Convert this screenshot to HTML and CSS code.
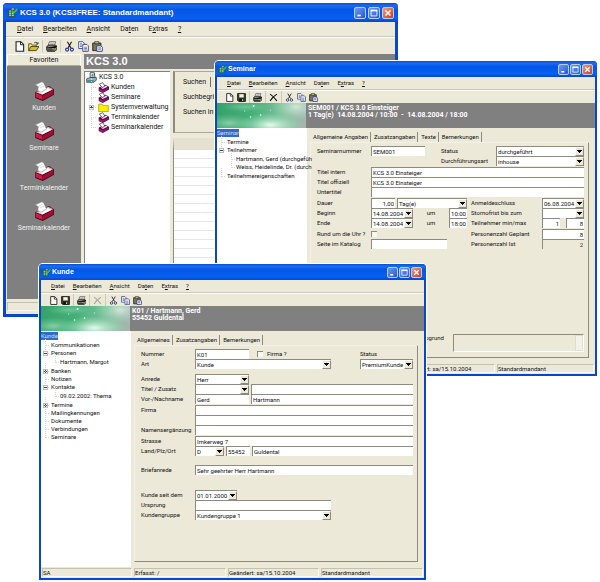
FILE: index.html
```html
<!DOCTYPE html>
<html lang="de">
<head>
    <meta charset="UTF-8">
    <meta name="viewport" content="width=device-width, initial-scale=1.0">
    <title>KCS 3.0</title>
    <link rel="stylesheet" href="styles.css">
</head>
<body>
    <svg class="sprites" aria-hidden="true">
        <symbol id="app" viewBox="0 0 16 16">
            <path fill="#2c5a50" d="M1 3h11v12H1z"/>
            <path fill="#8fd3a2" d="M3 5h3v2H3zM3 8h3v2H3zM3 11h3v2H3zM7 8h3v2H7zM7 11h3v2H7z"/>
            <path fill="#35c23c" d="M7 4l3 2 5-5v4l-5 5-3-3z"/>
            <path fill="#e4c33a" d="M7 2h3v2H7z"/>
        </symbol>
        <symbol id="new" viewBox="0 0 16 16">
            <path fill="#fff" stroke="#222" stroke-width="1.6" d="M3 1h7l4 4v10H3z"/>
            <path fill="none" stroke="#222" stroke-width="1.4" d="M9.500 1v4.500H14"/>
        </symbol>
        <symbol id="open" viewBox="0 0 16 16">
            <path fill="#ffe97a" stroke="#4a4300" stroke-width="1.2" d="M1 14V4h4l1 2h6v3"/>
            <path fill="#c9bf30" stroke="#3c3600" stroke-width="1.2" d="M1 14l3-6h12l-4 6z"/>
            <path fill="none" stroke="#222" stroke-width="1.2" d="M9 3c2-2 4-1 5 1M14.500 1.500v3h-3"/>
        </symbol>
        <symbol id="save" viewBox="0 0 16 16">
            <path fill="#3b3b28" stroke="#111" stroke-width="1.4" d="M1 1h14v14H3l-2-2z"/>
            <path fill="#f1efe4" d="M4 2h8v6H4z"/>
            <path fill="#111" d="M4 10h8v5H4z"/>
            <path fill="#ddd" d="M9 11h2v3H9z"/>
        </symbol>
        <symbol id="print" viewBox="0 0 16 16">
            <path fill="#fff" stroke="#333" d="M5 1h9l-2 6H3z"/>
            <path stroke="#777" d="M6 3h6M5 5h6"/>
            <path fill="#8b8b7c" stroke="#222" stroke-width="1.3" d="M1 8l3-2h10l2 2v4l-3 3H2l-1-2z"/>
            <path stroke="#111" stroke-width="1.3" d="M1 10h12l3-3M2 13h10"/>
            <path fill="#e5d44c" d="M9 11h3v1H9z"/>
        </symbol>
        <symbol id="delete" viewBox="0 0 16 16">
            <path fill="none" stroke="currentColor" stroke-width="2" d="M2 2c5 3 8 7 12 12M14 2C9 5 5 9 2 14"/>
        </symbol>
        <symbol id="cut" viewBox="0 0 16 16">
            <path fill="none" stroke="#222" stroke-width="1.6" d="M5 1l5 9M11 1L6 10"/>
            <circle cx="4.500" cy="12.500" r="2.200" fill="none" stroke="#263a86" stroke-width="1.6"/>
            <circle cx="11.500" cy="12.500" r="2.200" fill="none" stroke="#263a86" stroke-width="1.6"/>
        </symbol>
        <symbol id="copy" viewBox="0 0 16 16">
            <path fill="#fff" stroke="#31427e" stroke-width="1.3" d="M1 1h6l2 2v8H1z"/>
            <path fill="#fff" stroke="#31427e" stroke-width="1.3" d="M7 5h6l2 2v8H7z"/>
            <path stroke="#31427e" d="M3 4h3M3 6h3M3 8h3M9 9h4M9 11h4M9 13h4"/>
        </symbol>
        <symbol id="paste" viewBox="0 0 16 16">
            <path fill="#77755c" stroke="#222" stroke-width="1.3" d="M1 3h12v11H1z"/>
            <path fill="#d9cf6a" stroke="#222" d="M4 1h6v3H4z"/>
            <path fill="#fff" stroke="#26367a" stroke-width="1.3" d="M7 7h6l2 2v6H7z"/>
            <path stroke="#26367a" d="M9 10h4M9 12h4"/>
        </symbol>
        <symbol id="box" viewBox="0 0 32 32">
            <path fill="#3b0614" d="M2 18L24 8l8 5v9L14 32 2 27z"/>
            <path fill="#e9a9b9" d="M3 18l20-9 8 4-18 9z"/>
            <path fill="#fff" d="M7 18l15-7 6 3-14 7z"/>
            <path fill="#d3174a" d="M3 19l10 4v7L3 26z"/>
            <path fill="#a20d35" d="M13 24l18-10v7L13 31z"/>
            <path fill="#fff" stroke="#888" d="M2 6l11-5 3 3 4 9-9 5-5-3 1-6z"/>
            <path fill="none" stroke="#bbb" d="M8 8l6-3M10 11l6-3"/>
        </symbol>
        <symbol id="box-small" viewBox="0 0 16 16">
            <path fill="#5a0a4a" d="M1 8l10-4 5 3v4l-9 5-6-3z"/>
            <path fill="#f2dfe8" d="M4 8l8-3 2 2-7 3z"/>
            <path fill="#c2185b" d="M2 10l5 2v3l-5-2z"/>
            <path fill="#8a1478" d="M7 12l8-4v2l-8 5z"/>
            <path fill="#fff" stroke="#333" d="M2 3l5-2 3 5-4 2z"/>
        </symbol>
        <symbol id="root" viewBox="0 0 16 16">
            <path fill="#fff" stroke="#234" stroke-width="1.2" d="M6 1h6l1 7H6z"/>
            <path fill="#2f9fa0" d="M8 3h3v4H8z"/>
            <path fill="#9ab0b5" stroke="#233" d="M1 10l5-2h9v4l-4 3H1z"/>
            <path fill="#2d7f86" d="M2 12h9v2H2z"/>
        </symbol>
        <symbol id="folder" viewBox="0 0 16 16">
            <path fill="#ffef00" stroke="#98902a" d="M1 3h5l1 2h8v9H1z"/>
        </symbol>
        <symbol id="minimize" viewBox="0 0 12 12"><path fill="#fff" d="M3 8h4v2H3z"/></symbol>
        <symbol id="maximize" viewBox="0 0 12 12"><path fill="none" stroke="#fff" d="M2.500 3v6.500h7V3"/><path fill="#fff" d="M2 2h8v2H2z"/></symbol>
        <symbol id="close" viewBox="0 0 12 12"><path stroke="#fff" stroke-width="1.700" d="M3 3l6 6M9 3L3 9"/></symbol>
        <linearGradient id="sky" x1="0" x2="1">
            <stop offset="0" stop-color="#35a26a"/>
            <stop offset=".4" stop-color="#46b07a"/>
            <stop offset=".7" stop-color="#77bf97"/>
            <stop offset="1" stop-color="#a9b3b0"/>
        </linearGradient>
        <radialGradient id="glow">
            <stop offset="0" stop-color="#e6fbee"/>
            <stop offset="1" stop-color="#9be0b8" stop-opacity="0"/>
        </radialGradient>
        <symbol id="aurora" viewBox="0 0 90 25" preserveAspectRatio="none">
            <path fill="url(#sky)" d="M0 0h90v25H0z"/>
            <ellipse cx="54" cy="22" rx="34" ry="12" fill="url(#glow)"/>
            <ellipse cx="80" cy="4" rx="26" ry="14" fill="url(#glow)" opacity=".7"/>
            <ellipse cx="12" cy="20" rx="26" ry="9" fill="url(#glow)" opacity=".45"/>
            <ellipse cx="28" cy="4" rx="24" ry="5" fill="url(#glow)" opacity=".3"/>
            <g fill="#fff"><circle cx="37" cy="3" r="1"/><circle cx="44" cy="12" r=".8"/><circle cx="34" cy="14" r=".7"/><circle cx="28" cy="8" r=".5"/><circle cx="54" cy="7" r=".5"/></g>
        </symbol>
    </svg>

    <main class="desktop">
        <!-- Hauptfenster -->
        <section class="window window-main">
            <header class="titlebar">
                <svg class="icon"><use href="#app"/></svg>
                <h1>KCS 3.0 (KCS3FREE: Standardmandant)</h1>
                <button class="win-btn" aria-label="Minimieren"><svg><use href="#minimize"/></svg></button>
                <button class="win-btn" aria-label="Maximieren"><svg><use href="#maximize"/></svg></button>
                <button class="win-btn win-close" aria-label="Schließen"><svg><use href="#close"/></svg></button>
            </header>
            <nav class="menubar">
                <button><u>D</u>atei</button>
                <button><u>B</u>earbeiten</button>
                <button><u>A</u>nsicht</button>
                <button>Da<u>t</u>en</button>
                <button>E<u>x</u>tras</button>
                <button><u>?</u></button>
            </nav>
            <div class="toolbar">
                <button aria-label="Neu"><svg class="icon"><use href="#new"/></svg></button>
                <button aria-label="Öffnen"><svg class="icon"><use href="#open"/></svg></button>
                <span class="sep"></span>
                <button aria-label="Drucken"><svg class="icon"><use href="#print"/></svg></button>
                <span class="sep"></span>
                <button aria-label="Ausschneiden"><svg class="icon"><use href="#cut"/></svg></button>
                <button aria-label="Kopieren"><svg class="icon"><use href="#copy"/></svg></button>
                <button aria-label="Einfügen"><svg class="icon"><use href="#paste"/></svg></button>
            </div>
            <div class="main-body">
                <aside class="favorites">
                    <h2>Favoriten</h2>
                    <button><svg><use href="#box"/></svg>Kunden</button>
                    <button><svg><use href="#box"/></svg>Seminare</button>
                    <button><svg><use href="#box"/></svg>Terminkalender</button>
                    <button><svg><use href="#box"/></svg>Seminarkalender</button>
                </aside>
                <div class="workspace">
                    <h2 class="workspace-title">KCS 3.0</h2>
                    <div class="workspace-panes">
                        <div class="nav-tree">
                            <p><svg class="icon"><use href="#root"/></svg>KCS 3.0</p>
                            <ul>
                                <li><svg class="icon"><use href="#box-small"/></svg>Kunden</li>
                                <li><svg class="icon"><use href="#box-small"/></svg>Seminare</li>
                                <li class="closed"><svg class="icon"><use href="#folder"/></svg>Systemverwaltung</li>
                                <li><svg class="icon"><use href="#box-small"/></svg>Terminkalender</li>
                                <li><svg class="icon"><use href="#box-small"/></svg>Seminarkalender</li>
                            </ul>
                        </div>
                        <div class="search-side">
                            <div class="search">
                                <button class="search-tab">Suchen</button>
                                <p>Suchbegriff</p>
                                <p>Suchen in</p>
                            </div>
                            <div class="result-list"></div>
                        </div>
                    </div>
                </div>
            </div>
            <footer class="statusbar"><span></span></footer>
        </section>

        <!-- Seminar -->
        <section class="window window-small window-seminar">
            <header class="titlebar">
                <svg class="icon"><use href="#app"/></svg>
                <h1>Seminar</h1>
                <button class="win-btn" aria-label="Minimieren"><svg><use href="#minimize"/></svg></button>
                <button class="win-btn" aria-label="Maximieren"><svg><use href="#maximize"/></svg></button>
                <button class="win-btn win-close" aria-label="Schließen"><svg><use href="#close"/></svg></button>
            </header>
            <nav class="menubar">
                <button><u>D</u>atei</button>
                <button><u>B</u>earbeiten</button>
                <button><u>A</u>nsicht</button>
                <button>Da<u>t</u>en</button>
                <button>E<u>x</u>tras</button>
                <button><u>?</u></button>
            </nav>
            <div class="toolbar">
                <button aria-label="Neu"><svg class="icon"><use href="#new"/></svg></button>
                <button aria-label="Speichern"><svg class="icon"><use href="#save"/></svg></button>
                <span class="sep"></span>
                <button aria-label="Drucken"><svg class="icon"><use href="#print"/></svg></button>
                <span class="sep"></span>
                <button aria-label="Löschen"><svg class="icon"><use href="#delete"/></svg></button>
                <span class="sep"></span>
                <button aria-label="Ausschneiden"><svg class="icon"><use href="#cut"/></svg></button>
                <button aria-label="Kopieren"><svg class="icon"><use href="#copy"/></svg></button>
                <button aria-label="Einfügen"><svg class="icon"><use href="#paste"/></svg></button>
            </div>
            <div class="banner">
                <svg><use href="#aurora"/></svg>
                <p>SEM001 / KCS 3.0 Einsteiger<br>1 Tag(e)&nbsp; 14.08.2004 / 10:00&nbsp; -&nbsp; 14.08.2004 / 18:00</p>
            </div>
            <div class="record">
                <div class="tree">
                    <p><span>Seminar</span></p>
                    <ul>
                        <li>Termine</li>
                        <li class="opened">Teilnehmer
                            <ul>
                                <li>Hartmann, Gerd (durchgefüh</li>
                                <li>Weiss, Heidelinde, Dr. (durch</li>
                            </ul>
                        </li>
                        <li>Teilnehmereigenschaften</li>
                    </ul>
                </div>
                <div class="sheet">
                    <div class="tabs">
                        <button class="active">Allgemeine Angaben</button>
                        <button>Zusatzangaben</button>
                        <button>Texte</button>
                        <button>Bemerkungen</button>
                    </div>
                    <form class="form">
                        <div class="group">
                            <div class="row">
                                <label class="lead" for="semnr">Seminarnummer</label>
                                <input class="w-name" id="semnr" value="SEM001">
                                <label class="push status-label" for="semstatus">Status</label>
                                <span class="combo w-status"><select id="semstatus"><option>durchgeführt</option></select></span>
                            </div>
                            <div class="row">
                                <label class="push status-label" for="semart">Durchführungsart</label>
                                <span class="combo w-status"><select id="semart"><option>inhouse</option></select></span>
                            </div>
                        </div>
                        <div class="group">
                            <div class="row">
                                <label class="lead" for="intern">Titel intern</label>
                                <input class="fill" id="intern" value="KCS 3.0 Einsteiger">
                            </div>
                            <div class="row">
                                <label class="lead" for="offiziell">Titel offiziell</label>
                                <input class="fill" id="offiziell" value="KCS 3.0 Einsteiger">
                            </div>
                            <div class="row">
                                <label class="lead" for="untertitel">Untertitel</label>
                                <input class="fill" id="untertitel">
                            </div>
                        </div>
                        <div class="group">
                            <div class="row">
                                <label class="lead" for="dauer">Dauer</label>
                                <input class="w-plz num" id="dauer" value="1,00">
                                <span class="combo fill"><select aria-label="Einheit"><option>Tag(e)</option></select></span>
                                <label class="limit-label" for="anmelde">Anmeldeschluss</label>
                                <span class="combo w-date"><select id="anmelde"><option>06.08.2004</option></select></span>
                            </div>
                            <div class="row">
                                <label class="lead" for="beginn">Beginn</label>
                                <span class="combo w-date"><select id="beginn"><option>14.08.2004</option></select></span>
                                <label class="um" for="beginnzeit">um</label>
                                <input class="w-time num" id="beginnzeit" value="10:00">
                                <label class="limit-label" for="storno">Stornofrist bis zum</label>
                                <span class="combo w-date"><select id="storno"><option></option></select></span>
                            </div>
                            <div class="row">
                                <label class="lead" for="ende">Ende</label>
                                <span class="combo w-date"><select id="ende"><option>14.08.2004</option></select></span>
                                <label class="um" for="endezeit">um</label>
                                <input class="w-time num" id="endezeit" value="18:00">
                                <label class="limit-label" for="tnmin">Teilnehmer min/max</label>
                                <span class="minmax w-date">
                                    <input class="w-time num" id="tnmin" value="1">
                                    <input class="w-time num" aria-label="Teilnehmer max" value="8">
                                </span>
                            </div>
                        </div>
                        <div class="group">
                            <div class="row">
                                <label class="lead" for="rund">Rund um die Uhr ?</label>
                                <input type="checkbox" id="rund">
                                <label class="push limit-label" for="geplant">Personenzahl Geplant</label>
                                <input class="w-date num" id="geplant" value="8">
                            </div>
                            <div class="row">
                                <label class="lead" for="katalog">Seite im Katalog</label>
                                <input class="w-katalog" id="katalog">
                                <label class="push limit-label" for="ist">Personenzahl Ist</label>
                                <input class="w-date num" id="ist" value="2" disabled>
                            </div>
                        </div>
                        <div class="row row-note">
                            <label class="push" for="grund">Stornogrund</label>
                            <span class="note"><textarea id="grund" disabled></textarea><i></i></span>
                        </div>
                    </form>
                </div>
            </div>
            <footer class="statusbar">
                <span>SA</span><span>Erfasst: /</span><span>Geändert: sa/15.10.2004</span><span>Standardmandant</span>
            </footer>
        </section>

        <!-- Kunde -->
        <section class="window window-small window-kunde">
            <header class="titlebar">
                <svg class="icon"><use href="#app"/></svg>
                <h1>Kunde</h1>
                <button class="win-btn" aria-label="Minimieren"><svg><use href="#minimize"/></svg></button>
                <button class="win-btn" aria-label="Maximieren"><svg><use href="#maximize"/></svg></button>
                <button class="win-btn win-close" aria-label="Schließen"><svg><use href="#close"/></svg></button>
            </header>
            <nav class="menubar">
                <button><u>D</u>atei</button>
                <button><u>B</u>earbeiten</button>
                <button><u>A</u>nsicht</button>
                <button>Da<u>t</u>en</button>
                <button>E<u>x</u>tras</button>
                <button><u>?</u></button>
            </nav>
            <div class="toolbar">
                <button aria-label="Neu"><svg class="icon"><use href="#new"/></svg></button>
                <button aria-label="Speichern"><svg class="icon"><use href="#save"/></svg></button>
                <span class="sep"></span>
                <button aria-label="Drucken"><svg class="icon"><use href="#print"/></svg></button>
                <span class="sep"></span>
                <button aria-label="Löschen" disabled><svg class="icon"><use href="#delete"/></svg></button>
                <span class="sep"></span>
                <button aria-label="Ausschneiden"><svg class="icon"><use href="#cut"/></svg></button>
                <button aria-label="Kopieren"><svg class="icon"><use href="#copy"/></svg></button>
                <button aria-label="Einfügen"><svg class="icon"><use href="#paste"/></svg></button>
            </div>
            <div class="banner">
                <svg><use href="#aurora"/></svg>
                <p>K01 / Hartmann, Gerd<br>55452 Guldental</p>
            </div>
            <div class="record">
                <div class="tree">
                    <p><span>Kunde</span></p>
                    <ul>
                        <li>Kommunikationen</li>
                        <li class="opened">Personen
                            <ul>
                                <li>Hartmann, Margot</li>
                            </ul>
                        </li>
                        <li class="closed">Banken</li>
                        <li>Notizen</li>
                        <li class="opened">Kontakte
                            <ul>
                                <li>09.02.2002: Thema</li>
                            </ul>
                        </li>
                        <li class="closed">Termine</li>
                        <li>Mailingkennungen</li>
                        <li>Dokumente</li>
                        <li>Verbindungen</li>
                        <li>Seminare</li>
                    </ul>
                </div>
                <div class="sheet">
                    <div class="tabs">
                        <button class="active">Allgemeines</button>
                        <button>Zusatzangaben</button>
                        <button>Bemerkungen</button>
                    </div>
                    <form class="form">
                        <div class="group group-wide">
                            <div class="row">
                                <label class="lead" for="nummer">Nummer</label>
                                <input class="w-name" id="nummer" value="K01">
                                <input type="checkbox" class="firm-check" id="istfirma">
                                <label for="istfirma">Firma ?</label>
                                <label class="push w-premium" for="kstatus">Status</label>
                            </div>
                            <div class="row">
                                <label class="lead" for="art">Art</label>
                                <span class="combo w-half"><select id="art"><option>Kunde</option></select></span>
                                <span class="combo push w-premium"><select id="kstatus"><option>PremiumKunde</option></select></span>
                            </div>
                        </div>
                        <div class="group">
                            <div class="row">
                                <label class="lead" for="anrede">Anrede</label>
                                <span class="combo w-name"><select id="anrede"><option>Herr</option></select></span>
                            </div>
                            <div class="row">
                                <label class="lead" for="titel">Titel / Zusatz</label>
                                <span class="combo w-name"><select id="titel"><option></option></select></span>
                                <input class="fill" aria-label="Zusatz">
                            </div>
                            <div class="row">
                                <label class="lead" for="vorname">Vor-/Nachname</label>
                                <input class="w-name" id="vorname" value="Gerd">
                                <input class="fill" aria-label="Nachname" value="Hartmann">
                            </div>
                        </div>
                        <div class="group">
                            <div class="row">
                                <label class="lead" for="firma">Firma</label>
                                <input class="fill" id="firma">
                            </div>
                            <div class="row">
                                <span class="lead"></span>
                                <input class="fill" aria-label="Firma 2">
                            </div>
                            <div class="row">
                                <label class="lead" for="ergaenzung">Namensergänzung</label>
                                <input class="fill" id="ergaenzung">
                            </div>
                        </div>
                        <div class="group group-address">
                            <div class="row">
                                <label class="lead" for="strasse">Strasse</label>
                                <input class="fill" id="strasse" value="Imkerweg 7">
                            </div>
                            <div class="row">
                                <label class="lead" for="land">Land/Plz/Ort</label>
                                <span class="combo w-land"><select id="land"><option>D</option></select></span>
                                <input class="w-plz" aria-label="Plz" value="55452">
                                <input class="fill" aria-label="Ort" value="Guldental">
                            </div>
                        </div>
                        <div class="group group-letter">
                            <div class="row">
                                <label class="lead" for="brief">Briefanrede</label>
                                <input class="fill" id="brief" value="Sehr geehrter Herr Hartmann">
                            </div>
                        </div>
                        <div class="group">
                            <div class="row">
                                <label class="lead" for="seit">Kunde seit dem</label>
                                <span class="combo w-date"><select id="seit"><option>01.01.2000</option></select></span>
                            </div>
                            <div class="row">
                                <label class="lead" for="ursprung">Ursprung</label>
                                <input class="w-half" id="ursprung">
                            </div>
                            <div class="row">
                                <label class="lead" for="gruppe">Kundengruppe</label>
                                <span class="combo w-half"><select id="gruppe"><option>Kundengruppe 1</option></select></span>
                            </div>
                        </div>
                    </form>
                </div>
            </div>
            <footer class="statusbar">
                <span>SA</span><span>Erfasst: /</span><span>Geändert: sa/15.10.2004</span><span>Standardmandant</span>
            </footer>
        </section>
    </main>
</body>
</html>
```

FILE: styles.css
```css
*, *::before, *::after {
    box-sizing: border-box;
}
body {
    margin: 0;
    background-color: #fff;
    font-family: Roboto, "Liberation Sans", Arial, sans-serif;
    font-size: 7px;
    line-height: 10px;
    color: #111;
}
h1, h2, p, ul {
    margin: 0;
    padding: 0;
    font-size: inherit;
    font-weight: inherit;
    list-style: none;
}
button, input, select, textarea {
    margin: 0;
    padding: 0;
    border: none;
    border-radius: 0;
    outline: none;
    background: none;
    font: inherit;
    color: inherit;
}
.sprites {
    position: absolute;
    width: 0;
    height: 0;
}
.icon {
    width: 11px;
    height: 11px;
    flex: none;
    display: block;
}

/* windows */
.desktop {
    position: relative;
    min-height: 582px;
    overflow: hidden;
}
.window {
    position: absolute;
    display: flex;
    flex-direction: column;
    border: 3px solid #0a46c8;
    border-top: none;
    border-radius: 4px 4px 0 0;
    background-color: #ece9d8;
    box-shadow: 0 0 0 1px #fff;
}
.window-main {
    top: 3px;
    left: 3px;
    right: 202px;
    min-height: 314px;
}
.window-small {
    border-width: 2px;
    border-top: none;
    font-size: 6px;
    line-height: 8px;
}
.window-seminar {
    top: 61px;
    left: 215px;
    right: 3px;
    min-height: 315px;
}
.window-kunde {
    top: 264px;
    left: 39px;
    right: 174px;
    min-height: 316px;
}
.titlebar {
    display: flex;
    align-items: center;
    gap: 2px;
    height: 19px;
    margin: 0 -3px;
    padding: 0 4px 0 4px;
    border-radius: 4px 4px 0 0;
    background: linear-gradient(#0a50d0, #1a6cf4 15%, #0556e4 35%, #0560f4 80%, #0648c8);
    color: #fff;
}
.titlebar h1 {
    flex: 1;
    font-family: "Liberation Sans", Arial, sans-serif;
    font-size: 8px;
    font-weight: bold;
}
.window-small .titlebar {
    gap: 1px;
    height: 16px;
    margin: 0 -2px;
    padding: 0 4px 0 3px;
}
.window-small .titlebar h1 {
    font-size: 7px;
}
.window-small .icon {
    width: 9px;
    height: 9px;
}
.win-btn {
    width: 12px;
    height: 12px;
    border: 1px solid #b8ccf6;
    border-radius: 2px;
    background: linear-gradient(135deg, #6f9bf2, #2257d6);
}
.win-btn svg {
    display: block;
    width: 100%;
    height: 100%;
}
.window-small .win-btn {
    width: 11px;
    height: 11px;
}
.win-btn.win-close {
    background: linear-gradient(135deg, #f09a7c, #cf3c18);
}

/* menu and toolbar */
.menubar {
    display: flex;
    align-items: center;
    gap: 10px;
    height: 15px;
    padding-left: 11px;
    border-bottom: 1px solid #cdc9b6;
}
.toolbar {
    display: flex;
    align-items: center;
    gap: 3px;
    height: 17px;
    padding-left: 8px;
    border-top: 1px solid #fff;
}
.toolbar .sep {
    width: 1px;
    height: 12px;
    background-color: #cdc9b6;
}
.toolbar button:disabled {
    color: #a8a698;
}
.window-small .menubar {
    gap: 8px;
    height: 13px;
    padding-left: 10px;
}
.window-small .toolbar {
    height: 13px;
    padding-left: 8px;
}

/* main window */
.main-body {
    flex: 1;
    display: flex;
    gap: 3px;
    margin: 0 0 2px 1px;
}
.favorites {
    width: 74px;
    background-color: #808080;
    color: #f4f4f4;
}
.favorites h2 {
    height: 12px;
    margin-bottom: 11px;
    border: 1px solid #fff;
    border-bottom-color: #aca899;
    background-color: #ece9d8;
    color: #111;
    text-align: center;
}
.favorites button {
    display: block;
    width: 100%;
    height: 40px;
    text-align: center;
}
.favorites svg {
    display: block;
    width: 22px;
    height: 20px;
    margin: 0 auto 2px;
}
.workspace {
    flex: 1;
    display: flex;
    flex-direction: column;
}
.workspace-title {
    height: 15px;
    padding-left: 2px;
    background-color: #808080;
    color: #fff;
    font-family: "Liberation Sans", Arial, sans-serif;
    font-size: 11px;
    font-weight: bold;
    line-height: 15px;
}
.workspace-panes {
    flex: 1;
    display: flex;
    gap: 3px;
    padding-top: 2px;
}
.nav-tree {
    width: 86px;
    border-top: 1px solid #808080;
    border-left: 1px solid #808080;
    background-color: #fff;
}
.nav-tree p, .nav-tree li {
    display: flex;
    align-items: center;
    gap: 2px;
    height: 10px;
    white-space: nowrap;
}
.nav-tree p {
    padding-left: 1px;
}
.nav-tree li {
    position: relative;
    padding-left: 13px;
}
.nav-tree li::before, .tree li::before {
    content: "";
    position: absolute;
    top: -4px;
    left: 6px;
    width: 5px;
    height: 10px;
    border: dotted #d4d4d4;
    border-width: 0 0 1px 1px;
}
.search-side {
    flex: 1;
    display: flex;
    flex-direction: column;
    gap: 5px;
}
.search {
    height: 62px;
    padding: 5px 0 0 8px;
    border: 1px solid #aca899;
    border-left: 2px solid #8d8b7e;
    white-space: nowrap;
}
.search-tab {
    display: block;
    margin-bottom: 5px;
    padding-right: 4px;
    border-right: 1px solid #716f64;
}
.search p {
    height: 15px;
}
.result-list {
    flex: 1;
    border-top: 12px solid #e4e1d0;
    border-left: 1px solid #8d8b7e;
    background: repeating-linear-gradient(#fff 0 8px, #e6e6e6 8px 9px);
}

/* record windows */
.banner {
    display: flex;
    gap: 2px;
    height: 25px;
    background-color: #808080;
    color: #fff;
    font-size: 7px;
    font-weight: bold;
    line-height: 7px;
}
.banner svg {
    width: 89px;
    height: 25px;
}
.banner p {
    padding-top: 2px;
}
.record {
    flex: 1;
    display: flex;
}
.tree {
    width: 90px;
    background-color: #fff;
    white-space: nowrap;
}
.tree p {
    margin: 1px 0;
}
.tree p span {
    display: inline-block;
    background-color: #316ac5;
    color: #c8dcff;
}
.tree li {
    position: relative;
    padding-left: 10px;
}
.tree li li {
    padding-left: 9px;
}
.tree li::before {
    left: 4px;
    width: 4px;
    height: 9px;
}
.tree li ul {
    padding: 1px 0;
}
.closed::after, .opened::after {
    content: "";
    position: absolute;
    top: 2px;
    left: 2px;
    width: 5px;
    height: 5px;
    border: 1px solid #b4bcc8;
    background: linear-gradient(#444, #444) 0 1px / 3px 1px no-repeat #fff;
}
.closed::after {
    background: linear-gradient(#444, #444) 0 1px / 3px 1px no-repeat, linear-gradient(#444, #444) 1px 0 / 1px 3px no-repeat #fff;
}
.nav-tree .closed::after {
    top: 3px;
    left: 4px;
}
.sheet {
    flex: 1;
    display: flex;
    flex-direction: column;
    padding: 4px 6px 5px 3px;
}
.tabs {
    display: flex;
    gap: 2px;
    height: 10px;
}
.tabs button {
    padding: 0 2px 0 1px;
    border-right: 1px solid #8d8b7e;
}
.tabs .active {
    padding-left: 3px;
}
.form {
    flex: 1;
    display: flex;
    flex-direction: column;
    padding: 3px 4px 5px 6px;
    border: 1px solid #f4f2e8;
    border-right-color: #8d8b7e;
    border-bottom-color: #8d8b7e;
}
.group {
    margin-bottom: 1px;
}
.group-wide {
    margin-bottom: 5px;
}
.group-address {
    margin-bottom: 9px;
}
.group-letter {
    margin-bottom: 15px;
}
.row {
    display: flex;
    align-items: center;
    gap: 2px;
    height: 10px;
    white-space: nowrap;
}
.lead {
    width: 52px;
}
.push {
    margin-left: auto;
}
.fill {
    flex: 1;
    min-width: 0;
}
.w-name { width: 54px; }
.w-status { width: 88px; }
.w-date { width: 42px; }
.w-time { width: 18px; }
.w-land { width: 29px; }
.w-plz { width: 24px; }
.w-katalog { width: 76px; }
.w-half { width: 136px; }
.w-premium { width: 53px; }
.status-label {
    width: 53px;
}
.limit-label {
    width: 71px;
    padding-left: 2px;
}
.um {
    flex: 1;
    text-align: center;
}
.num {
    text-align: right;
}
.row input, .row select, .row textarea {
    height: 10px;
    padding: 0 1px;
    border-top: 1px solid #8d8b7e;
    border-left: 1px solid #8d8b7e;
    background-color: #fff;
}
.row input:disabled, .row textarea:disabled {
    background-color: #ece9d8;
    color: #333;
}
.row input[type="checkbox"] {
    appearance: none;
    width: 6px;
    height: 6px;
    background-color: #f8f7f0;
}
.row .firm-check {
    margin: 0 2px 0 6px;
}
.combo {
    position: relative;
    display: flex;
}
.combo select {
    appearance: none;
    width: 100%;
}
.combo::after {
    content: "";
    position: absolute;
    top: 1px;
    right: 0;
    width: 9px;
    height: 9px;
    border: 1px solid #fff;
    border-right-color: #8d8b7e;
    border-bottom-color: #8d8b7e;
    background: linear-gradient(#000, #000) 1px 2px / 5px 1px no-repeat, linear-gradient(#000, #000) 2px 3px / 3px 1px no-repeat, linear-gradient(#000, #000) 3px 4px / 1px 1px no-repeat #ece9d8;
    pointer-events: none;
}
.minmax {
    display: flex;
    justify-content: space-between;
}
.row-note {
    height: 18px;
    margin-top: auto;
    gap: 9px;
    align-items: flex-start;
}
.note {
    display: flex;
    width: 131px;
    border: 1px solid #fff;
    border-top-color: #8d8b7e;
    border-left-color: #8d8b7e;
}
.row .note textarea {
    flex: 1;
    width: 0;
    height: 16px;
    border: none;
    resize: none;
}
.note i {
    width: 8px;
    background-color: #f4f2e8;
    border: 1px solid #e0ddcc;
}
.statusbar {
    display: grid;
    grid-template-columns: 90px 92px 91px 1fr;
    gap: 2px;
    height: 11px;
    padding: 1px 1px;
}
.statusbar span {
    height: 9px;
    border: 1px solid #f8f7f0;
    border-top-color: #c4c1af;
    border-left-color: #c4c1af;
    line-height: 8px;
    white-space: nowrap;
}
.window-main .statusbar {
    grid-template-columns: 1fr;
    height: 13px;
}
```
